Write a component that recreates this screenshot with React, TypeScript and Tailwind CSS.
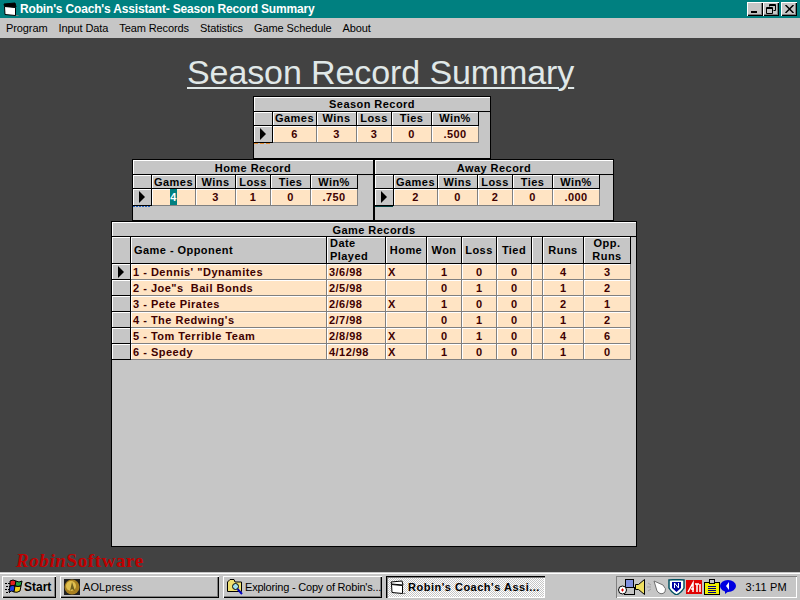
import type { ReactNode } from "react";

const games = [
  ['1 - Dennis\' "Dynamites', "3/6/98", "X", "1", "0", "0", "4", "3"],
  ['2 - Joe"s  Bail Bonds', "2/5/98", "", "0", "1", "0", "1", "2"],
  ["3 - Pete Pirates", "2/6/98", "X", "1", "0", "0", "2", "1"],
  ["4 - The Redwing's", "2/7/98", "", "0", "1", "0", "1", "2"],
  ["5 - Tom Terrible Team", "2/8/98", "X", "0", "1", "0", "4", "6"],
  ["6 - Speedy", "4/12/98", "X", "1", "0", "0", "1", "0"],
];

const headCell = "flex items-center justify-center border-r border-b border-black bg-[#c6c6c6] shadow-[inset_1px_1px_0_#fff] text-black";
const dataCell = "flex items-center border-r border-b border-[#808080] bg-[#ffe4c4] shadow-[inset_1px_1px_0_#fff] text-[#400000] overflow-hidden whitespace-pre";

function Triangle() {
  return (
    <svg width="8" height="12" viewBox="0 0 8 12">
      <path d="M1 0 L7 6 L1 12 Z" fill="#000" />
    </svg>
  );
}

function RecordPanel({ title, vals, selected, dash, className, lower }: { title: string; vals: string[]; selected?: boolean; dash: string; className: string; lower?: boolean }) {
  return (
    <div className={`border border-black bg-[#c6c6c6] ${className}`}>
      <div className={`flex h-[15px] items-center justify-center border-b border-black tracking-[0.45px] shadow-[inset_1px_1px_0_#fff] ${lower ? "pt-[2px]" : ""}`}>{title}</div>
      <div className="grid grid-cols-[19px_44px_40px_35px_40px_47px] grid-rows-[14px_17px]">
        <div className={headCell} />
        {["Games", "Wins", "Loss", "Ties", "Win%"].map((h) => (
          <div key={h} className={`${headCell} tracking-[0.45px] ${lower ? "pt-px" : ""}`}>{h}</div>
        ))}
        <div className={headCell}>
          <Triangle />
        </div>
        {vals.map((v, i) => (
          <div key={i} className={`${dataCell} justify-center tracking-[0.45px]`}>
            {selected && i === 0 ? <span className="flex h-full w-[7px] items-center justify-center bg-[#008080] text-white">{v}</span> : v}
          </div>
        ))}
      </div>
      <div className={`h-px w-[18px] ${dash}`} />
    </div>
  );
}

function GameTable() {
  const heads: ReactNode[] = [
    "",
    <span className="w-full pl-[3px] text-left">Game - Opponent</span>,
    <span className="w-full pl-[3px] text-left leading-[13px]">Date<br />Played</span>,
    "Home", "Won", "Loss", "Tied", "", "Runs",
    <span className="text-center leading-[13px]">Opp.<br />Runs</span>,
  ];
  return (
    <div className="ml-[111px] h-[326px] w-[526px] border border-black bg-[#c6c6c6]">
      <div className="flex h-[15px] items-center justify-center border-b border-black pt-[2px] tracking-[0.45px] shadow-[inset_1px_1px_0_#fff]">Game Records</div>
      <div className="grid grid-cols-[19px_196px_59px_41px_35px_35px_35px_11px_41px_47px] grid-rows-[27px_repeat(6,16px)]">
        {heads.map((h, i) => (
          <div key={i} className={`${headCell} tracking-[0.45px]`}>{h}</div>
        ))}
        {games.map((g, r) => (
          <Row key={r} first={r === 0} g={g} />
        ))}
      </div>
    </div>
  );
}

function Row({ g, first }: { g: string[]; first: boolean }) {
  return (
    <>
      <div className={headCell}>{first && <Triangle />}</div>
      <div className={`${dataCell} pt-px pl-[2px] tracking-[0.5px]`}>{g[0]}</div>
      <div className={`${dataCell} pt-px pl-[2px] tracking-[0.45px]`}>{g[1]}</div>
      <div className={`${dataCell} pt-px pl-[2px]`}>{g[2]}</div>
      <div className={`${dataCell} justify-center pt-px`}>{g[3]}</div>
      <div className={`${dataCell} justify-center pt-px`}>{g[4]}</div>
      <div className={`${dataCell} justify-center pt-px`}>{g[5]}</div>
      <div className={dataCell} />
      <div className={`${dataCell} justify-center pt-px`}>{g[6]}</div>
      <div className={`${dataCell} justify-center pt-px`}>{g[7]}</div>
    </>
  );
}

function WinButton({ children, className = "" }: { children: ReactNode; className?: string }) {
  return (
    <div className={`flex h-[14px] w-[16px] items-center justify-center bg-[#c6c6c6] shadow-[inset_1px_1px_0_#fff,inset_-1px_-1px_0_#000,inset_-2px_-2px_0_#808080] ${className}`}>
      {children}
    </div>
  );
}

function WinLogo() {
  return (
    <svg width="18" height="16" viewBox="0 0 18 16" className="shrink-0">
      <path d="M0 4.500h5M1 7.500h4M0 10.500h5M1 13.500h4" stroke="#000" strokeDasharray="2 1" />
      <path d="M5 2 Q8 0 11 2 L10 7 Q8 6 5 7 Z" fill="#e02020" stroke="#000" />
      <path d="M11 2 Q14 4 17 2 L16 7 Q13 8 10 7 Z" fill="#20a040" stroke="#000" />
      <path d="M5 7 Q8 6 10 7 L9 13 Q7 11 4 13 Z" fill="#2040e0" stroke="#000" />
      <path d="M10 7 Q13 8 16 7 L15 12 Q12 14 9 13 Z" fill="#f0d020" stroke="#000" />
    </svg>
  );
}

function AolIcon() {
  return (
    <svg width="16" height="16" viewBox="0 0 16 16" className="shrink-0">
      <rect width="16" height="16" fill="#202020" />
      <circle cx="8" cy="8" r="7.500" fill="#a88020" />
      <circle cx="7" cy="7" r="5" fill="#e0c050" />
      <path d="M8 3 L11 12 L8 10 L6 12 Z" fill="#706020" />
    </svg>
  );
}

function ExplorerIcon() {
  return (
    <svg width="16" height="16" viewBox="0 0 16 16" className="shrink-0">
      <path d="M0.500 3 L3 0.500 H7 L8 3 H14.500 V12.500 H0.500 Z" fill="#f0e070" stroke="#000" />
      <circle cx="8.500" cy="7.500" r="3" fill="#a0e0f0" stroke="#000" />
      <path d="M10.500 10 L15 15" stroke="#0000c0" strokeWidth="2" />
    </svg>
  );
}

function SmallWindow({ top = "#000" }: { top?: string }) {
  return (
    <svg width="16" height="16" viewBox="0 0 16 16" className="shrink-0">
      <path d="M1.500 5.500 L2 13.500 L12.500 14.500 L12.500 6.500 Z" fill="#fff" stroke="#000" />
      <path d="M1 3 L12 2 L13 6 L1.500 5 Z" fill={top} stroke="#000" />
      <path d="M13 14.500 H15.500" stroke="#808080" />
    </svg>
  );
}

function TrayIcons() {
  return (
    <div className="flex items-center">
      <svg width="17" height="16" viewBox="0 0 17 16">
        <rect x="7.500" y="0.500" width="8" height="8" fill="#8090e0" stroke="#000" />
        <rect x="6.500" y="8.500" width="10" height="7" fill="#c6c6c6" stroke="#000" />
        <circle cx="4.500" cy="11" r="4" fill="#fff" stroke="#000" />
        <path d="M3 11h3M4.500 9.500v3" stroke="#e00000" />
      </svg>
      <svg width="12" height="16" viewBox="0 0 12 16">
        <path d="M0.500 5.500h3l6-5v15l-6-5h-3z" fill="#f0e060" stroke="#000" />
      </svg>
      <svg width="21" height="16" viewBox="0 0 21 16">
        <path d="M0 8h4M1 4l3 2M1 12l3-2" stroke="#a0a0a0" />
        <path d="M7 2 L16 6 Q20 10 18 13 Q14 17 10 12 Z" fill="#fff" stroke="#707070" />
      </svg>
      <svg width="17" height="16" viewBox="0 0 17 16">
        <path d="M1 1 L8.500 0.500 L16 1 V9 Q14 13 8.500 16 Q3 13 1 9 Z" fill="#fff" stroke="#005060" strokeWidth="1.500" />
        <path d="M4 3 H13 V9 L8.500 13 L4 9 Z" fill="#0000a0" />
        <path d="M6.500 9V4l4 5V4" stroke="#fff" fill="none" />
      </svg>
      <svg width="16" height="14" viewBox="0 0 16 14" className="ml-[1px]">
        <rect width="16" height="14" fill="#e00000" />
        <path d="M2 12 L7 3 V12 M5 9 H8 M9 4 H13 M11 4 V12 M14 4 V12" stroke="#fff" strokeWidth="1.500" fill="none" />
      </svg>
      <svg width="16" height="16" viewBox="0 0 16 16" className="ml-[2px]">
        <rect x="0.500" y="3.500" width="15" height="12" fill="#f0f000" stroke="#000" />
        <rect x="5.500" y="0.500" width="5" height="4" fill="#c6c6c6" stroke="#000" />
        <path d="M4 7.500h8M4 9.500h8M4 11.500h8M4 13.500h8" stroke="#000080" />
      </svg>
      <svg width="16" height="14" viewBox="0 0 16 14">
        <ellipse cx="8" cy="6" rx="8" ry="6" fill="#0000e0" />
        <path d="M5 10 L5 14 L9 11 Z" fill="#0000e0" />
        <path d="M9 2 L6 6 L9 10 Z" fill="#fff" />
      </svg>
    </div>
  );
}

const taskBtn = "mt-[2px] flex h-[22px] items-center overflow-hidden bg-[#c6c6c6] pl-[4px] whitespace-nowrap text-black shadow-[inset_1px_1px_0_#fff,inset_-1px_-1px_0_#000,inset_-2px_-2px_0_#808080]";

export default function App() {
  return (
    <div className="flex h-[600px] w-[800px] flex-col overflow-hidden bg-[#424242] font-['Liberation_Sans',sans-serif] text-[11px] font-bold text-black">
      <div className="flex h-[18px] items-center bg-[#008080] pl-[3px] pr-[3px]">
        <SmallWindow />
        <span className="ml-[1px] text-[12px] tracking-[-0.17px] text-white">Robin's Coach's Assistant- Season Record Summary</span>
        <div className="ml-auto flex items-center">
          <WinButton>
            <div className="mt-[6px] mr-[2px] h-[2px] w-[6px] bg-black" />
          </WinButton>
          <WinButton>
            <svg width="10" height="10" viewBox="0 0 10 10">
              <path d="M3.500 2.500V0.500H9.500V6.500H7.500M3.500 1.500H9.500M0.500 3.500H6.500V9.500H0.500ZM0.500 4.500H6.500" stroke="#000" fill="none" />
            </svg>
          </WinButton>
          <WinButton className="ml-[2px]">
            <svg width="9" height="8" viewBox="0 0 9 8">
              <path d="M0.500 0L8.500 8M8.500 0L0.500 8" stroke="#000" strokeWidth="1.500" />
            </svg>
          </WinButton>
        </div>
      </div>
      <div className="flex h-[20px] items-center gap-[11px] bg-[#c6c6c6] pl-[6px] text-[11px] font-normal tracking-[-0.1px]">
        <span>Program</span>
        <span>Input Data</span>
        <span>Team Records</span>
        <span>Statistics</span>
        <span>Game Schedule</span>
        <span>About</span>
      </div>
      <div className="flex h-[534px] flex-col">
        <div className="ml-[187px] h-[58px] pt-[15px] text-[34px] leading-[39px] font-normal tracking-[-0.1px] text-[#e0e8e8]">
          <span className="underline decoration-2 underline-offset-[3px]">Season Record Summary</span>
        </div>
        <RecordPanel title="Season Record" vals={["6", "3", "3", "0", ".500"]} dash="bg-[repeating-linear-gradient(90deg,#e08a30_0_4px,#c6c6c6_4px_6px)]" className="ml-[253px] h-[63px] w-[238px]" />
        <div className="ml-[132px] flex">
          <RecordPanel title="Home Record" vals={["4", "3", "1", "0", ".750"]} selected lower dash="bg-[repeating-linear-gradient(90deg,#2060c0_0_2px,#c6c6c6_2px_3px)]" className="h-[62px] w-[242px]" />
          <RecordPanel title="Away Record" vals={["2", "0", "2", "0", ".000"]} lower dash="bg-[#004040]" className="h-[62px] w-[240px]" />
        </div>
        <GameTable />
        <div className="mt-[4px] ml-[16px] font-['Liberation_Serif',serif] text-[19px] leading-[20px] tracking-[0.6px] text-[#c00000]">
          <i>Robin</i>Software
        </div>
      </div>
      <div className="flex h-[28px] items-center gap-[4px] bg-[#c6c6c6] pl-[2px] shadow-[inset_0_1px_0_#c6c6c6,inset_0_2px_0_#fff]">
        <div className={`${taskBtn} w-[54px] gap-[1px] !pl-[3px] text-[12px]`}>
          <WinLogo />
          Start
        </div>
        <div className={`${taskBtn} w-[159px] gap-[3px] text-[11px] font-normal tracking-[0.1px]`}>
          <AolIcon />
          AOLpress
        </div>
        <div className={`${taskBtn} w-[159px] gap-[2px] text-[11px] font-normal tracking-[-0.2px]`}>
          <ExplorerIcon />
          Exploring - Copy of Robin's...
        </div>
        <div className="mt-[2px] flex h-[22px] w-[159px] items-center gap-[2px] overflow-hidden bg-[repeating-conic-gradient(#fff_0_25%,#c6c6c6_0_50%)] bg-[length:2px_2px] pl-[4px] whitespace-nowrap text-[11px] tracking-[0.5px] shadow-[inset_1px_1px_0_#000,inset_2px_2px_0_#808080,inset_-1px_-1px_0_#fff]">
          <SmallWindow top="#fff" />
          Robin's Coach's Assi...
        </div>
        <div className="mt-[2px] mr-[3px] ml-auto flex h-[22px] w-[181px] items-center pl-[2px] text-[11px] font-normal tracking-[0.2px] shadow-[inset_1px_1px_0_#808080,inset_-1px_-1px_0_#fff]">
          <TrayIcons />
          <span className="ml-auto pr-[10px]">3:11 PM</span>
        </div>
      </div>
    </div>
  );
}
